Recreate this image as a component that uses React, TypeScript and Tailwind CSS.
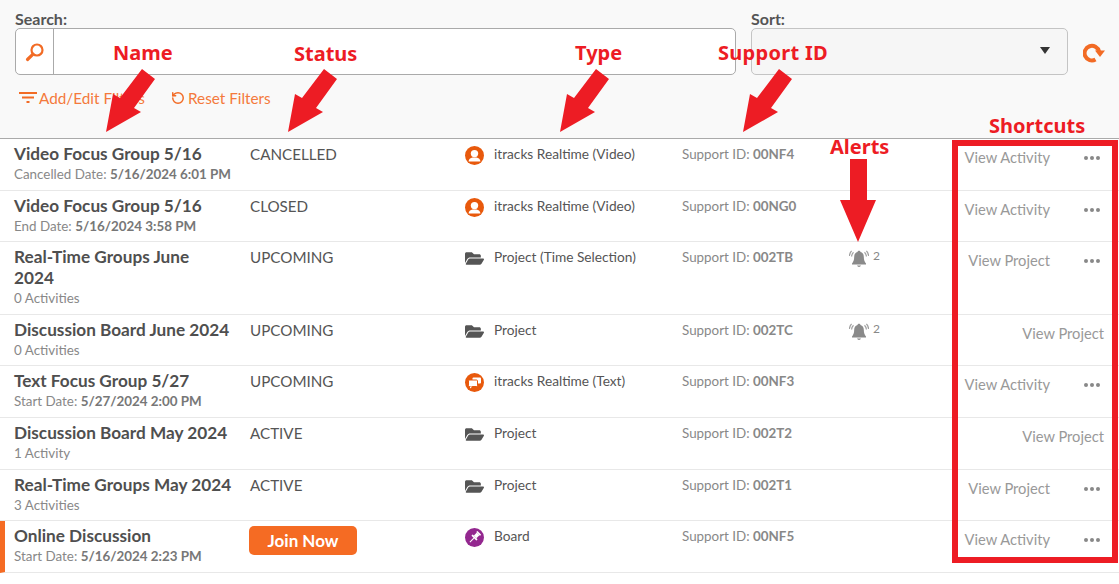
import { RotateCcw } from 'lucide-react';
import { FaFolderOpen } from 'react-icons/fa';

type Row = {
  name: string;
  sub: string;
  subBold?: string;
  status: string;
  icon: 'user' | 'folder' | 'chat' | 'pin';
  type: string;
  id: string;
  alerts?: number;
  link: 'View Activity' | 'View Project';
  menu: boolean;
  live?: boolean;
};

const rows: Row[] = [
  { name: 'Video Focus Group 5/16', sub: 'Cancelled Date:', subBold: '5/16/2024 6:01 PM', status: 'CANCELLED', icon: 'user', type: 'itracks Realtime (Video)', id: '00NF4', link: 'View Activity', menu: true },
  { name: 'Video Focus Group 5/16', sub: 'End Date:', subBold: '5/16/2024 3:58 PM', status: 'CLOSED', icon: 'user', type: 'itracks Realtime (Video)', id: '00NG0', link: 'View Activity', menu: true },
  { name: 'Real-Time Groups June 2024', sub: '0 Activities', status: 'UPCOMING', icon: 'folder', type: 'Project (Time Selection)', id: '002TB', alerts: 2, link: 'View Project', menu: true },
  { name: 'Discussion Board June 2024', sub: '0 Activities', status: 'UPCOMING', icon: 'folder', type: 'Project', id: '002TC', alerts: 2, link: 'View Project', menu: false },
  { name: 'Text Focus Group 5/27', sub: 'Start Date:', subBold: '5/27/2024 2:00 PM', status: 'UPCOMING', icon: 'chat', type: 'itracks Realtime (Text)', id: '00NF3', link: 'View Activity', menu: true },
  { name: 'Discussion Board May 2024', sub: '1 Activity', status: 'ACTIVE', icon: 'folder', type: 'Project', id: '002T2', link: 'View Project', menu: false },
  { name: 'Real-Time Groups May 2024', sub: '3 Activities', status: 'ACTIVE', icon: 'folder', type: 'Project', id: '002T1', link: 'View Project', menu: true },
  { name: 'Online Discussion', sub: 'Start Date:', subBold: '5/16/2024 2:23 PM', status: 'JOIN', icon: 'pin', type: 'Board', id: '00NF5', link: 'View Activity', menu: true, live: true },
];

function TypeIcon({ icon }: { icon: Row['icon'] }) {
  if (icon === 'folder') {
    return <FaFolderOpen className="w-[19px] h-[19px] text-[#555]" />;
  }
  if (icon === 'pin') {
    return (
      <svg viewBox="0 0 19 19" className="w-[19px] h-[19px]">
        <circle cx="9.500" cy="9.500" r="9.500" fill="#93278f" />
        <g transform="rotate(45 9.500 9.500)" fill="#fff">
          <rect x="6.800" y="2.800" width="5.400" height="1.600" rx="0.500" />
          <rect x="7.700" y="4.400" width="3.600" height="4.200" />
          <rect x="6" y="8.600" width="7" height="1.800" rx="0.500" />
          <rect x="9" y="10.400" width="1" height="5.600" />
        </g>
      </svg>
    );
  }
  if (icon === 'chat') {
    return (
      <svg viewBox="0 0 19 19" className="w-[19px] h-[19px]">
        <circle cx="9.500" cy="9.500" r="9.500" fill="#e8590c" />
        <rect x="7.500" y="4.500" width="8.500" height="6" rx="1" fill="#fff" />
        <rect x="3.500" y="7" width="9" height="6.500" rx="1" fill="#fff" stroke="#e8590c" strokeWidth="1" />
        <path d="M5 13.500v2l2.400-2z" fill="#fff" />
      </svg>
    );
  }
  return (
    <svg viewBox="0 0 19 19" className="w-[19px] h-[19px]">
      <circle cx="9.500" cy="9.500" r="9.500" fill="#e8590c" />
      <circle cx="9.500" cy="7.600" r="3.700" fill="#fff" />
      <path d="M3.600 15.500c0-2.600 1.800-3.700 3.900-4.100h4c2.100 .4 3.900 1.500 3.900 4.100z" fill="#fff" />
    </svg>
  );
}

function BellIcon() {
  return (
    <svg viewBox="0 0 20 20" className="w-[20px] h-[20px] mt-[2px] -ml-[1px]">
      <path d="M10 1.800c.9 0 1.500.6 1.500 1.300 2.300.7 3.300 2.500 3.300 4.700 0 3.300.9 5.200 2.200 6.600v1.100H3v-1.100c1.300-1.400 2.200-3.300 2.200-6.600 0-2.200 1-4 3.300-4.700 0-.7.600-1.300 1.500-1.300z" fill="#8a8a8a" />
      <path d="M8 16.500a2.100 2.100 0 0 0 4 0z" fill="#8a8a8a" />
      <path d="M4.500 3.200C3.300 4.300 2.700 5.700 2.600 7.500M2.600 1.800C1.200 3.200 .5 4.900 .4 7M15.500 3.200c1.200 1.100 1.800 2.500 1.900 4.300M17.400 1.800c1.400 1.400 2.100 3.100 2.200 5.200" fill="none" stroke="#a0a0a0" strokeWidth="1.200" />
    </svg>
  );
}

function Dots() {
  return (
    <span className="flex gap-[2px] ml-[34px] mr-[4px] mt-[9px]">
      <span className="w-1 h-1 rounded-full bg-[#888]" />
      <span className="w-1 h-1 rounded-full bg-[#888]" />
      <span className="w-1 h-1 rounded-full bg-[#888]" />
    </span>
  );
}

function ListRow({ row }: { row: Row }) {
  return (
    <div className={`grid grid-cols-[235px_216px_217px_168px_102px_1fr] border-b border-[#e8e8e8] pt-[5px] pb-[5px] pl-[14px] pr-[15px] ${row.live ? 'border-l-[5px] border-l-[#f56b23] !pl-[9px]' : ''}`}>
      <div className="pr-[17px] -mt-px">
        <div className="text-[17.2px] leading-[21px] font-bold text-[#4f4f4f]">{row.name}</div>
        <div className="mt-px text-[13.4px] leading-[19.6px] text-[#888]">
          {row.sub} {row.subBold && <span className="font-bold text-[#777]">{row.subBold}</span>}
        </div>
      </div>
      <div>
        {row.status === 'JOIN' ? (
          <button className="w-[108px] h-[29px] rounded-[5px] bg-[#f56b23] text-white font-bold text-[17px] leading-none">Join Now</button>
        ) : (
          <div className="text-[15.2px] leading-[21px] text-[#555] pl-px">{row.status}</div>
        )}
      </div>
      <div className="flex items-start gap-[10px] text-[13.7px] leading-[20px] text-[#555]">
        <span className="mt-[2px] shrink-0"><TypeIcon icon={row.icon} /></span>
        {row.type}
      </div>
      <div className="text-[13.4px] leading-[20px] text-[#888]">
        Support ID: <span className="font-bold">{row.id}</span>
      </div>
      <div>
        {row.alerts && (
          <div className="flex items-start gap-[4px] text-[12px] leading-[18px] text-[#888]">
            <BellIcon />
            {row.alerts}
          </div>
        )}
      </div>
      <div className="flex justify-end items-start pt-[3px] text-[14.7px] leading-[21px] text-[#999]">
        {row.link}
        {row.menu && <Dots />}
      </div>
    </div>
  );
}

function Label({ text, className }: { text: string; className: string }) {
  return (
    <span className={`absolute text-[20px] leading-none font-bold text-[#ed1c24] font-['Noto_Sans',sans-serif] ${className}`}>{text}</span>
  );
}

export default function App() {
  // tip of each diagonal arrow
  const tips = [106, 288, 560, 743];

  return (
    <div className="relative min-h-[584px] bg-white font-['Lato',sans-serif] overflow-hidden">
      {/* Filters */}
      <div className="h-[139px] bg-[#f9f9f9] border-b border-[#aaa] pt-[10px] pl-[15px]">
        <div className="flex">
          <div className="w-[721px]">
            <div className="text-[16px] leading-[18px] font-bold text-[#555]">Search:</div>
            <div className="h-[47px] flex border border-[#aaa] rounded-[5px] bg-white">
              <div className="w-[38px] border-r border-[#aaa] flex items-center justify-center">
                <svg viewBox="0 0 22 22" className="w-[22px] h-[22px]" fill="none" stroke="#f26b25">
                  <circle cx="13" cy="9" r="5.500" strokeWidth="2.200" />
                  <path d="M8.800 13.300L3.500 18.500" strokeWidth="3.200" strokeLinecap="round" />
                </svg>
              </div>
            </div>
          </div>
          <div className="ml-[15px] w-[317px]">
            <div className="text-[16px] leading-[18px] font-bold text-[#555]">Sort:</div>
            <div className="h-[47px] flex items-center justify-end pr-[17px] pb-[3px] border border-[#c4c4c4] rounded-[5px] bg-[#f6f6f6]">
              <span className="w-0 h-0 border-x-[5px] border-x-transparent border-t-[7px] border-t-[#333]" />
            </div>
          </div>
          <div className="ml-[15px] mt-[18px] h-[47px] flex items-center">
            <svg viewBox="0 0 24 22" className="w-[24px] h-[22px]" fill="none">
              <path d="M12.500 18.500A7.300 7.300 0 1 1 16 10.500" stroke="#f26b25" strokeWidth="4" />
              <path d="M12 9.500h10l-5 6.500z" fill="#f26b25" />
            </svg>
          </div>
        </div>
        <div className="flex items-center mt-[13px] pl-[4px] text-[15.3px] leading-[20px] text-[#f47a3c]">
          <svg viewBox="0 0 18 14" className="w-[18px] h-[14px] mr-[2px]" fill="#f26b25">
            <rect x="0" y="1" width="18" height="2" />
            <rect x="3" y="5.500" width="12" height="2" />
            <rect x="7.500" y="10" width="3" height="2" />
          </svg>
          Add/Edit Filters
          <RotateCcw className="w-[14px] h-[14px] ml-[26px] mr-[3px] text-[#f26b25]" strokeWidth={2.5} />
          Reset Filters
        </div>
      </div>

      {/* List */}
      <div>
        {rows.map((row) => (
          <ListRow key={row.id} row={row} />
        ))}
      </div>

      {/* Annotations drawn over the page */}
      <svg className="absolute inset-0 w-[1119px] h-[584px] pointer-events-none" viewBox="0 0 1119 584">
        {tips.map((x) => (
          <polygon
            key={x}
            fill="#ed1c24"
            points={`${x},132 ${x + 35},112 ${x + 28},108 ${x + 49},79 ${x + 36},69 ${x + 14},98 ${x + 7},94`}
          />
        ))}
        <polygon fill="#ed1c24" points="850,159 867,159 867,200 876,200 858,242 840,200 850,200" />
      </svg>
      <div className="absolute left-[952px] top-[140px] w-[166px] h-[423px] border-[6px] border-[#ed1c24]" />
      <Label text="Name" className="left-[113px] top-[43px]" />
      <Label text="Status" className="left-[294px] top-[44px]" />
      <Label text="Type" className="left-[575px] top-[43px]" />
      <Label text="Support ID" className="left-[718px] top-[43px] tracking-[0.3px]" />
      <Label text="Alerts" className="left-[830px] top-[137px]" />
      <Label text="Shortcuts" className="left-[989px] top-[116px]" />
    </div>
  );
}
